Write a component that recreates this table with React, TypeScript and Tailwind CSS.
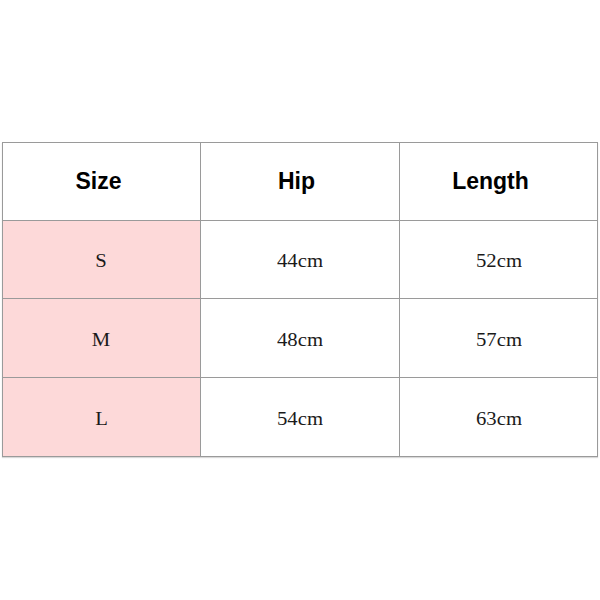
const rows = [
  { size: "S", hip: "44cm", length: "52cm", h: "h-[78px]" },
  { size: "M", hip: "48cm", length: "57cm", h: "h-[79px]" },
  { size: "L", hip: "54cm", length: "63cm", h: "h-[79px]" },
];

const cell = "flex items-center justify-center border-r border-b border-[#9a9a9a]";
const serif = "font-['Liberation_Serif',serif] text-[18px] text-[#1a1a1a] pt-[4px]";
const sans = "font-['Liberation_Sans',Arial,sans-serif] text-[23px] font-bold text-black";

function Val({ children }: { children: string }) {
  return <span className="inline-block scale-x-[1.15]">{children}</span>;
}

export default function App() {
  return (
    <div className="w-[600px] h-[600px] bg-white pt-[142px] pl-[2px]">
      <div className="grid w-fit grid-cols-[198px_199px_198px] border-l border-t border-[#9a9a9a] shadow-[0_1px_1px_rgba(0,0,0,0.15)]">
        <div className={`${cell} h-[78px] pr-[6px] ${sans}`}>Size</div>
        <div className={`${cell} h-[78px] pr-[7px] ${sans}`}>Hip</div>
        <div className={`${cell} h-[78px] pr-[16px] ${sans}`}>Length</div>
        {rows.map((r) => (
          <>
            <div key={r.size + "s"} className={`${cell} ${r.h} ${serif} bg-[#fdd9d9]`}>
              <Val>{r.size}</Val>
            </div>
            <div key={r.size + "h"} className={`${cell} ${r.h} ${serif}`}>
              <Val>{r.hip}</Val>
            </div>
            <div key={r.size + "l"} className={`${cell} ${r.h} ${serif}`}>
              <Val>{r.length}</Val>
            </div>
          </>
        ))}
      </div>
    </div>
  );
}
